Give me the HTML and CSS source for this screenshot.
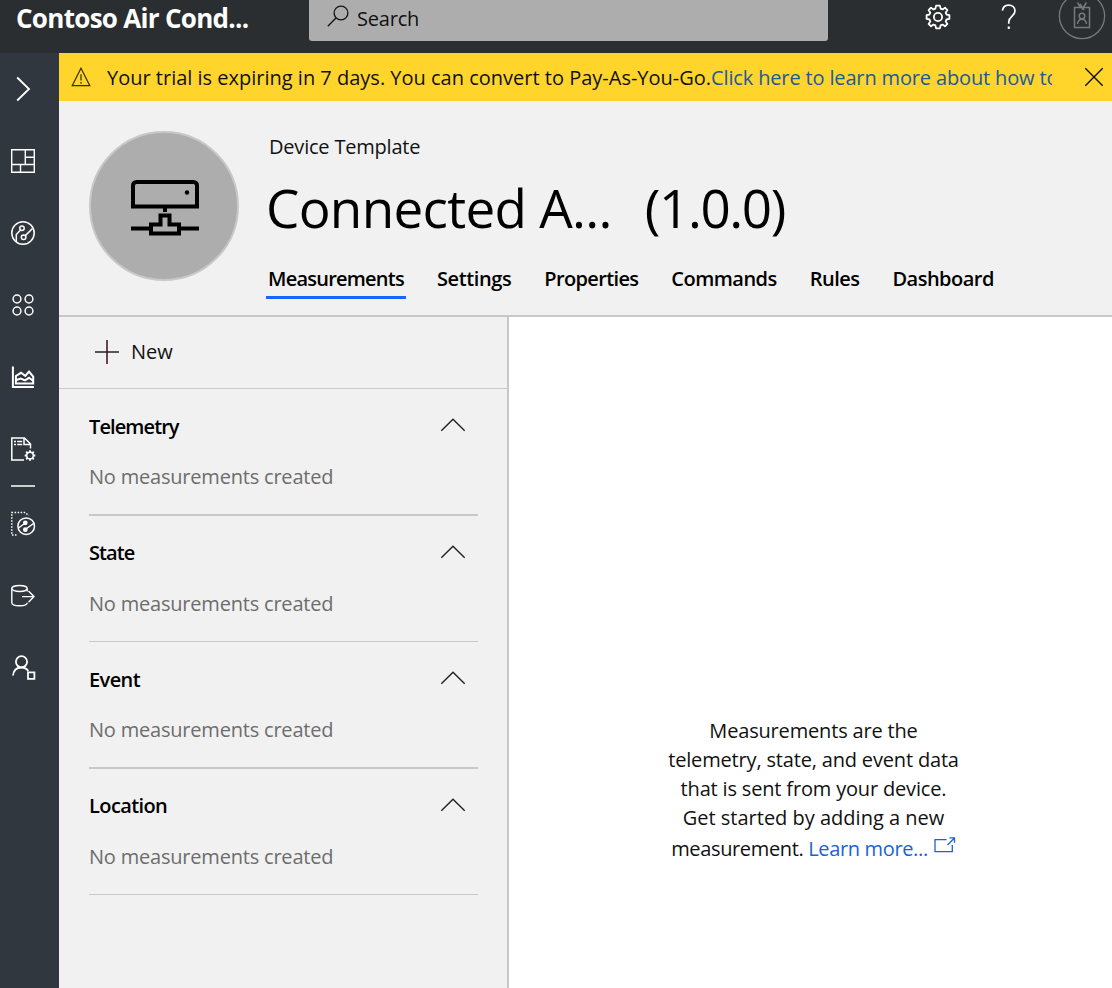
FILE: index.html
```html
<!DOCTYPE html>
<html lang="en">
<head>
<meta charset="utf-8">
<title>Device Template</title>
<link rel="stylesheet" href="styles.css">
</head>
<body>
<header class="topbar">
  <div class="brand">Contoso Air Cond...</div>
  <div class="search">
    <svg width="22" height="22" viewBox="0 0 22 22" fill="none" stroke="#111" stroke-width="1.3"><circle cx="14" cy="8" r="6.9"/><path d="M9.2 12.8L.8 21.2"/></svg>
    <span>Search</span>
  </div>
  <div class="actions">
    <svg class="gear" width="26" height="26" viewBox="-13 -13 26 26" fill="none" stroke="#fff" stroke-width="1.8" stroke-linejoin="round"><circle r="4.1"/><path d="M-1.9-11.4H1.9L2.6-8.4 4.5-7.6 7-9.3 9.4-6.8 7.7-4.4 8.5-2.5 11.4-1.9V1.900L8.500 2.500 7.700 4.400 9.400 6.900 7 9.300 4.500 7.600 2.600 8.400 1.900 11.400H-1.900L-2.600 8.400-4.500 7.600-7 9.300-9.400 6.900-7.700 4.400-8.500 2.500-11.400 1.900V-1.900L-8.500-2.500-7.700-4.400-9.400-6.800-7-9.300-4.500-7.600-2.600-8.400Z"/></svg>
    <svg class="help" width="16" height="26" viewBox="0 0 16 26" fill="none" stroke="#fff" stroke-width="1.700"><path d="M1.400 6.600C2 3 4.200 1.200 7.500 1.200c3.800 0 6.500 2.200 6.500 5.700 0 5.400-6.200 5.700-6.200 10.800v2"/><path d="M7.800 22.500v2.400" stroke-width="2.200"/></svg>
    <svg class="avatar" width="48" height="48" viewBox="0 0 48 48" fill="none" stroke="#77797b" stroke-width="1.300"><circle cx="24" cy="24" r="22.600"/><path d="M16.500 15.500h15v20h-15zM19.500 10.500l3 5M28.500 10.500l-4.500 7M22 12l4 6" stroke-width="1.500"/><circle cx="24" cy="24" r="2.800" stroke-width="1.500"/><path d="M19.500 32c.5-3 2-4.800 4.500-4.800s4 1.800 4.500 4.800" stroke-width="1.500"/></svg>
  </div>
</header>
<div class="shell">
  <nav class="rail">
    <a class="rail-item"><svg width="26" height="26" viewBox="0 0 26 26" stroke-width="1.800"><path d="M7.200 1.500L19 13 7.200 24.500"/></svg></a>
    <a class="rail-item"><svg width="26" height="26" viewBox="0 0 26 26" stroke-width="1.400"><path d="M1.700 1.700h22.600v22.600H1.700zM1.700 16.500h22.600M15.300 1.700v14.800M15.300 9.300h9M10.500 16.500v7.800"/></svg></a>
    <a class="rail-item"><svg width="26" height="26" viewBox="0 0 26 26" stroke-width="1.500"><circle cx="13" cy="13" r="11.200"/><circle cx="12" cy="8.300" r="2.200"/><circle cx="13.600" cy="17.300" r="2.300"/><path d="M10.500 10L6.300 14.500v7M15.300 15.600L22.500 8.500"/></svg></a>
    <a class="rail-item"><svg width="26" height="26" viewBox="0 0 26 26" stroke-width="1.500"><circle cx="7" cy="7" r="3.900"/><circle cx="19" cy="7" r="3.900"/><circle cx="7" cy="19" r="3.900"/><circle cx="19" cy="19" r="3.900"/></svg></a>
    <a class="rail-item"><svg width="26" height="26" viewBox="0 0 26 26" stroke-width="2"><path d="M2.900 2.500v20.500h21"/><path d="M5.900 19.500V12l5.100-3.200 4.300 3L19 7.500l4.200 5v7z"/><path d="M5.500 16.200l5.200-1.700 4.300 1.800 4-2.500 4.300 3.200"/></svg></a>
    <a class="rail-item"><svg width="26" height="26" viewBox="0 0 26 26" stroke-width="1.500"><path d="M14 24H1.800V2H14.500l6 6v4.500M14 2v6.500h6.500"/><path d="M4 5.500h2M7.200 5.500h5M4 8.600h2M7.200 8.600h5"/><circle cx="20" cy="19.500" r="3.300"/><path d="M20 14.200v2.300M20 22.500v2.300M14.700 19.500H17M23 19.500h2.300M16.200 15.700l1.600 1.600M22.200 21.700l1.600 1.600M16.200 23.300l1.600-1.600M22.200 17.300l1.600-1.600" stroke-width="1.900"/></svg></a>
    <div class="rail-line"></div>
    <a class="rail-item raised"><svg width="26" height="26" viewBox="0 0 26 26" stroke-width="1.500"><path d="M6.500 24H1.800V1.500H14.500L19 4.500" stroke-dasharray="1.500 1.500"/><circle cx="16.200" cy="15.200" r="8.300"/><circle cx="15.300" cy="11.800" r="1.600" fill="#fff"/><circle cx="15.300" cy="18.700" r="1.600" fill="#fff"/><path d="M14.500 12.500l-6 4.500M16 18l7.500-5.500"/></svg></a>
    <a class="rail-item raised"><svg width="26" height="26" viewBox="0 0 26 26" stroke-width="1.400"><ellipse cx="9.500" cy="5.500" rx="7.700" ry="3"/><path d="M1.800 5.500v14.300c0 1.800 3.200 3 7.700 3s7.700-1.200 7.700-3M17.200 5.500v3M12 13.600h12M18.500 8l5.500 5.600-5.500 5.600"/></svg></a>
    <a class="rail-item raised"><svg width="26" height="26" viewBox="0 0 26 26" stroke-width="1.800"><circle cx="11.500" cy="6.800" r="5.600"/><path d="M3 20.500c.5-5 3.800-8 8.500-8 3 0 5.300 1.300 6.800 3.500M18 17.400h6.400v6.400H18z"/></svg></a>
  </nav>
  <main class="page">
    <div class="banner">
      <svg width="20" height="20" viewBox="0 0 20 20" fill="none" stroke="#33300a" stroke-width="1.200"><path d="M10 1.200L18.800 18.700H1.200zM10 7.200v6.300M10 15v1.800"/></svg>
      <div class="notice">Your trial is expiring in 7 days. You can convert to Pay-As-You-Go.<a class="notice-link">Click here to learn more about how to</a></div>
      <svg width="20" height="20" viewBox="0 0 20 20" stroke="#111" stroke-width="1.400"><path d="M1.300 1.300l17.400 17.400M18.700 1.300L1.300 18.700"/></svg>
    </div>
    <section class="hero">
      <div class="picture">
        <svg width="70" height="58" viewBox="0 0 70 58" fill="none" stroke="#000" stroke-width="4"><path d="M3 27.500V6.500a3.500 3.500 0 0 1 3.500-3.500h57a3.500 3.500 0 0 1 3.500 3.500v21zM35 27v6M1 49.500h19M50 49.500h19M21 54.500v-9h9.500v-9h9v9H49v9z"/><circle cx="57" cy="13.500" r="2.200" fill="#000" stroke="none"/></svg>
      </div>
      <div class="heading">
        <div class="kind">Device Template</div>
        <h1 class="title"><span class="name">Connected A...</span><span class="version">(1.0.0)</span></h1>
        <div class="tabs">
          <a class="tab tight selected">Measurements</a><a class="tab loose">Settings</a><a class="tab snug">Properties</a><a class="tab">Commands</a><a class="tab">Rules</a><a class="tab">Dashboard</a>
        </div>
      </div>
    </section>
    <div class="content">
      <aside class="panel">
        <div class="toolbar">
          <svg width="24" height="24" viewBox="0 0 24 24" stroke="#222" stroke-width="1.500"><path d="M0 12h24"/><path d="M12 0v24" stroke="#3a0c10"/></svg>
          <span>New</span>
        </div>
        <div class="group thick"><div class="group-head"><h2 class="tight">Telemetry</h2><svg class="caret" viewBox="0 0 26 14"><path d="M1.300 12.800L13 1.300l11.700 11.500"/></svg></div><p>No measurements created</p></div>
        <div class="group"><div class="group-head"><h2 class="tight">State</h2><svg class="caret" viewBox="0 0 26 14"><path d="M1.300 12.800L13 1.300l11.700 11.500"/></svg></div><p>No measurements created</p></div>
        <div class="group thick"><div class="group-head"><h2>Event</h2><svg class="caret" viewBox="0 0 26 14"><path d="M1.300 12.800L13 1.300l11.700 11.500"/></svg></div><p>No measurements created</p></div>
        <div class="group"><div class="group-head"><h2>Location</h2><svg class="caret" viewBox="0 0 26 14"><path d="M1.300 12.800L13 1.300l11.700 11.500"/></svg></div><p>No measurements created</p></div>
      </aside>
      <section class="empty">
        <p>Measurements are the<br>telemetry, state, and event data<br>that is sent from your device.<br><span class="wide">Get started by adding a new</span></p>
        <p class="more">measurement. <a>Learn more...</a><svg width="22" height="16" viewBox="0 0 22 16" fill="none" stroke="#1a62d6" stroke-width="1.300"><path d="M12.500 2.700H1v12h17.300V8M13.500 8l7-7M15.500.8h5v5"/></svg></p>
      </section>
    </div>
  </main>
</div>
</body>
</html>
```
FILE: styles.css
```css
* { box-sizing: border-box; }
body { margin: 0; height: 988px; overflow: hidden; display: flex; flex-direction: column; font-family: "Open Sans", "Noto Sans", sans-serif; font-size: 20px; color: #111; }
svg { flex: none; display: block; }
h1, h2, p { margin: 0; }
a, span { white-space: nowrap; }
.topbar { height: 53px; flex: none; background: #2a2e31; display: flex; align-items: flex-start; }
.brand { width: 309px; padding-left: 16px; color: #fff; font-size: 26px; font-weight: 700; line-height: 37px; letter-spacing: -.7px; }
.search { width: 519px; height: 41px; padding: 5px 0 0 18px; background: #adadad; border-radius: 0 0 3px 3px; display: flex; gap: 8px; line-height: 27px; letter-spacing: -.2px; }
.actions { flex: 1; display: flex; }
.gear { margin: 4px 0 0 97px; }
.help { margin: 4px 0 0 50px; }
.avatar { margin: -8px 0 0 41px; }
.shell { flex: 1; display: flex; }
.rail { width: 59px; background: #31373f; }
.rail-item { width: 46px; height: 72px; display: flex; align-items: center; justify-content: center; }
.raised { padding-bottom: 1px; }
.rail-item svg { fill: none; stroke: #fff; }
.rail-line { height: 2px; width: 24px; margin: 0 0 1px 11px; background: #ccc; }
.page { flex: 1; min-width: 0; display: flex; flex-direction: column; background: #f1f1f1; }
.banner { height: 48px; flex: none; background: #ffd52b; display: flex; align-items: center; padding: 0 8px 0 12px; }
.notice { width: 945px; margin: 0 32px 0 16px; padding-top: 1px; overflow: hidden; white-space: nowrap; line-height: 48px; }
.notice-link { color: #1a5a9c; letter-spacing: -.15px; }
.hero { height: 216px; flex: none; border-bottom: 2px solid #c8c8c8; padding: 30px 0 0 30px; display: flex; }
.picture { width: 150px; height: 150px; border-radius: 50%; border: 2px solid #c8c8c8; background: #adadad; display: flex; align-items: center; justify-content: center; padding: 3px 0 0 2px; }
.heading { margin-left: 27px; }
.kind { height: 32px; line-height: 31px; padding-left: 3px; letter-spacing: -.2px; }
.title { height: 90px; line-height: 90px; font-size: 53px; font-weight: 400; color: #000; display: flex; gap: 33px; }
.name { letter-spacing: -.7px; }
.version { letter-spacing: -1.4px; }
.tabs { display: flex; gap: 29px; }
.tab { height: 46px; line-height: 52px; padding: 0 2px; font-weight: 600; letter-spacing: -.52px; color: #000; }
.tab.loose { letter-spacing: -.37px; }
.tab.snug { letter-spacing: -.65px; }
.tab.tight { letter-spacing: -.77px; }
.selected { border-bottom: 3px solid #1467ff; }
.content { flex: 1; display: flex; }
.panel { width: 450px; border-right: 2px solid #c8c8c8; }
.toolbar { height: 72px; border-bottom: 1px solid #c8c8c8; padding: 0 0 2px 35.5px; display: flex; align-items: center; gap: 12.5px; }
.group { height: 126px; margin: 0 29px 0 30px; border-bottom: 1px solid #c8c8c8; padding-top: 22px; }
.thick { height: 127px; border-bottom-width: 2px; }
.group-head { display: flex; justify-content: space-between; padding-right: 12px; height: 50px; }
.group h2 { font-size: 20px; line-height: 30px; font-weight: 600; letter-spacing: -.6px; color: #000; }
.thick h2 { line-height: 32px; }
.group h2.tight { letter-spacing: -.9px; }
.group p { color: #6d6d6d; line-height: 32px; letter-spacing: -.2px; }
.caret { width: 26px; height: 14px; margin-top: 7px; fill: none; stroke: #222; stroke-width: 1.4; }
.empty { flex: 1; background: #fff; padding: 399px 0 0 6px; text-align: center; line-height: 29px; letter-spacing: -.17px; }
.empty a { color: #1a62d6; }
.wide { letter-spacing: 0; }
.more { height: 31px; line-height: 33px; display: flex; justify-content: center; white-space: pre; letter-spacing: -.35px; }
.more svg { margin: 5px 0 0 6px; }
```
